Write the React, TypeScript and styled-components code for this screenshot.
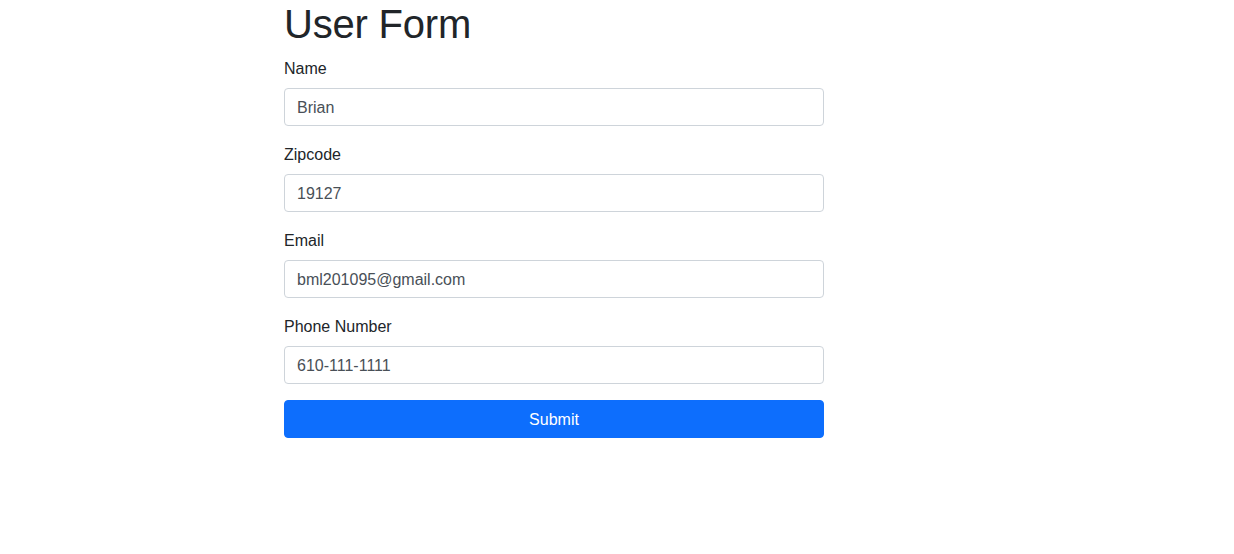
import React from "react";
import styled, { createGlobalStyle } from "styled-components";

const GlobalStyle = createGlobalStyle`
  * { box-sizing: border-box; }
  body {
    margin: 0;
    font-family: "Liberation Sans", Arial, sans-serif;
    font-size: 16px;
    line-height: 1.5;
    color: #212529;
    background: #fff;
  }
`;

const Container = styled.div`
  width: 540px;
  margin: 0 auto 0 284px;
`;

const Title = styled.h1`
  margin: 0 0 8px;
  font-size: 40px;
  font-weight: 500;
  line-height: 1.2;
  letter-spacing: -0.2px;
`;

const Group = styled.div`
  margin-bottom: 16px;
`;

const Label = styled.label`
  display: block;
  margin-bottom: 8px;
  padding-top: 1px;
  height: 24px;
  font-size: 16px;
  line-height: 24px;
`;

const Input = styled.input`
  display: block;
  width: 100%;
  height: 38px;
  padding: 7px 12px 5px;
  font-family: inherit;
  font-size: 16px;
  line-height: 24px;
  color: #495057;
  background: #fff;
  border: 1px solid #ced4da;
  border-radius: 4px;
  outline: none;
`;

const Button = styled.button`
  display: block;
  width: 100%;
  height: 38px;
  padding: 7px 12px 5px;
  font-family: inherit;
  font-size: 16px;
  line-height: 24px;
  color: #fff;
  background: #0d6efd;
  border: 1px solid #0d6efd;
  border-radius: 4px;
  cursor: pointer;
`;

const fields = [
  { label: "Name", value: "Brian" },
  { label: "Zipcode", value: "19127" },
  { label: "Email", value: "bml201095@gmail.com" },
  { label: "Phone Number", value: "610-111-1111" },
];

export default function App() {
  return (
    <>
      <GlobalStyle />
      <Container>
        <Title>User Form</Title>
        <form onSubmit={(e) => e.preventDefault()}>
          {fields.map((f) => (
            <Group key={f.label}>
              <Label>{f.label}</Label>
              <Input defaultValue={f.value} />
            </Group>
          ))}
          <Button type="submit">Submit</Button>
        </form>
      </Container>
    </>
  );
}
